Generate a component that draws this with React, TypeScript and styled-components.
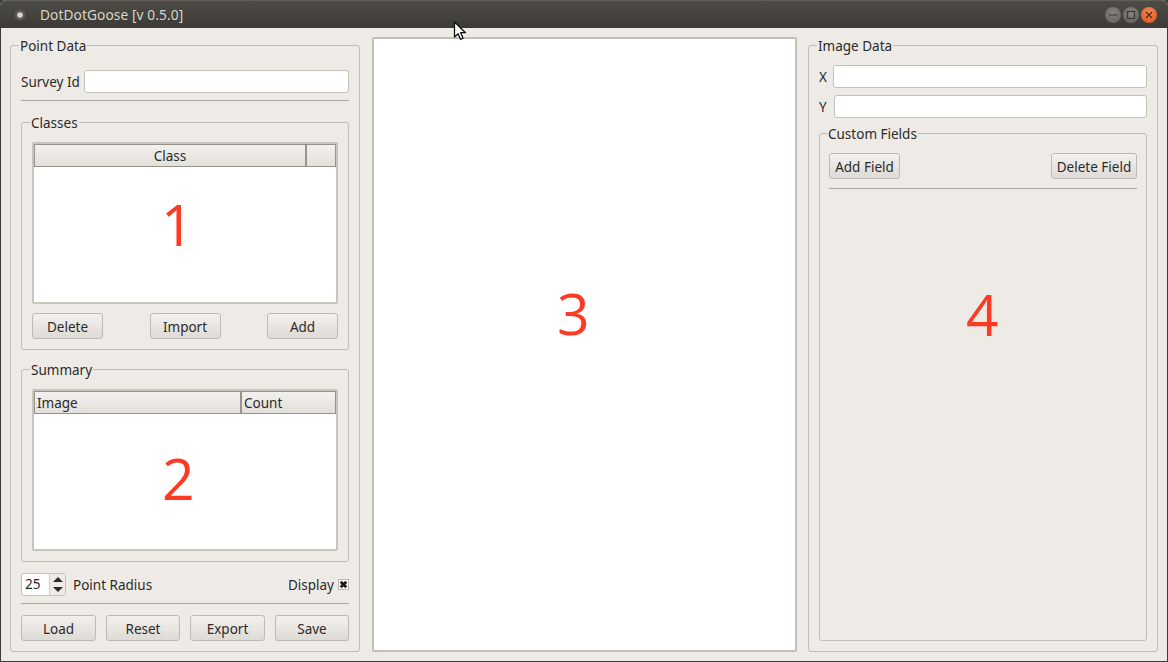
import React, { FC } from 'react';
import styled, { createGlobalStyle } from 'styled-components';

const Global = createGlobalStyle`
  html, body {
    margin: 0;
    padding: 0;
    background: #3c3b37;
  }
  * { box-sizing: border-box; }
`;

const Window = styled.div`
  position: relative;
  width: 1168px;
  height: 662px;
  display: flex;
  flex-direction: column;
  overflow: hidden;
  background: #eeebe7;
  border-radius: 6px 6px 0 0;
  font-family: "Noto Sans", "Open Sans", sans-serif;
  font-size: 13.5px;
  color: #2b2a28;
`;

const TitleBar = styled.div`
  height: 28px;
  flex: none;
  display: flex;
  align-items: center;
  padding: 0 11px 0 14px;
  background: linear-gradient(#4e4c46, #3b3a36);
  border-top: 1px solid #5f5d56;
  color: #d9d5cb;
  font-size: 13.7px;
  letter-spacing: 0.1px;
`;

const AppDot = styled.svg`
  width: 12px;
  height: 12px;
  margin-right: 14px;
`;

const Title = styled.span`
  flex: 1;
`;

const WinControls = styled.div`
  display: flex;
  gap: 2px;
`;

const WinBtn = styled.div<{ $close?: boolean }>`
  width: 16px;
  height: 16px;
  border-radius: 50%;
  display: flex;
  align-items: center;
  justify-content: center;
  background: ${p => p.$close
    ? 'radial-gradient(circle at 50% 35%, #f48a55, #df4e1c)'
    : 'radial-gradient(circle at 50% 35%, #85837c, #5e5d57)'};
`;

const Body = styled.div`
  flex: 1;
  min-height: 0;
  display: grid;
  grid-template-columns: 351px 425px 350px;
  column-gap: 11px;
  padding: 8px 9px 9px;
  border: 1px solid #3c3b37;
  border-top: 0;
`;

const Group = styled.fieldset<{ $top?: number }>`
  min-width: 0;
  margin: 0;
  padding: ${p => p.$top ?? 11}px 10px 10px;
  border: 1px solid #c0bdb6;
  border-radius: 3px;
  display: flex;
  flex-direction: column;
`;

const PointGroup = styled(Group)`
  margin-right: 1px;
`;

const Legend = styled.legend`
  padding: 0 1px;
  margin-left: -2px;
  height: 18px;
  line-height: 20px;
`;

const Row = styled.div<{ $mt?: number }>`
  display: flex;
  align-items: center;
  margin-top: ${p => p.$mt ?? 0}px;
`;

const Label = styled.span<{ $w?: number; $ml?: number }>`
  flex: none;
  width: ${p => (p.$w ? `${p.$w}px` : 'auto')};
  margin-left: ${p => p.$ml ?? 0}px;
  white-space: nowrap;
`;

const TextInput = styled.div`
  flex: 1;
  height: 23px;
  background: #fff;
  border: 1px solid #c4c1ba;
  border-radius: 3px;
`;

const Separator = styled.hr<{ $mt: number }>`
  width: 100%;
  height: 1px;
  flex: none;
  margin: ${p => p.$mt}px 0 0;
  border: 0;
  background: #a8a59e;
`;

const TableBox = styled.div`
  height: 162px;
  flex: none;
  display: flex;
  flex-direction: column;
  background: #fff;
  border: 2px solid #c8c5be;
  border-radius: 2px;
`;

const TableHead = styled.div`
  height: 23px;
  flex: none;
  display: flex;
`;

const HeadCell = styled.div<{ $w?: number; $center?: boolean }>`
  flex: ${p => (p.$w ? `0 0 ${p.$w}px` : '1')};
  display: flex;
  align-items: center;
  justify-content: ${p => (p.$center ? 'center' : 'flex-start')};
  padding: 0 2px;
  background: linear-gradient(#f3f1ee, #e3e0db);
  border: 1px solid #96938c;
`;

const TableArea = styled.div`
  flex: 1;
`;

const BigNum = styled.span<{ $x: number; $y: number }>`
  position: absolute;
  left: ${p => p.$x}px;
  top: ${p => p.$y}px;
  font-family: "Open Sans", "Noto Sans", sans-serif;
  font-size: 57px;
  font-weight: 500;
  line-height: 1;
  color: #ff3a24;
`;

const BtnRow = styled.div<{ $mt: number }>`
  display: flex;
  justify-content: space-between;
  flex: none;
  margin-top: ${p => p.$mt}px;
`;

const Btn = styled.div<{ $w: number }>`
  width: ${p => p.$w}px;
  height: 26px;
  padding-top: 1px;
  display: flex;
  align-items: center;
  justify-content: center;
  background: linear-gradient(#f3f1ee, #dedbd6);
  border: 1px solid #bdbab3;
  border-radius: 3px;
  white-space: nowrap;
`;

const Spin = styled.div`
  width: 45px;
  height: 23px;
  flex: none;
  display: flex;
  background: #fff;
  border: 1px solid #c4c1ba;
  border-radius: 3px;
  overflow: hidden;
`;

const SpinValue = styled.span`
  flex: 1;
  padding-left: 3px;
  line-height: 21px;
`;

const SpinArrows = styled.div`
  width: 16px;
  display: flex;
  flex-direction: column;
  background: #eeebe7;
  border-left: 1px solid #d0cdc6;
`;

const SpinArrow = styled.div<{ $down?: boolean }>`
  flex: 1;
  display: flex;
  align-items: center;
  justify-content: center;
  &::before {
    content: '';
    border-left: 5px solid transparent;
    border-right: 5px solid transparent;
    ${p => (p.$down ? 'border-top: 5px solid #2b2a28;' : 'border-bottom: 5px solid #2b2a28;')}
  }
`;

const Spacer = styled.div`
  flex: 1;
`;

const Check = styled.svg`
  width: 11px;
  height: 11px;
  margin-left: 4px;
  flex: none;
`;

const Canvas = styled.div`
  margin-top: 1px;
  background: #fff;
  border: 2px solid #c2bfb8;
  border-radius: 2px;
`;

const ClassesGroup = styled(Group)`
  flex: none;
  margin-top: 12px;
`;

const SummaryGroup = styled(Group)`
  flex: none;
  margin-top: 10px;
`;

const CustomGroup = styled(Group)`
  flex: 1;
  min-height: 0;
  margin-top: 6px;
  padding-left: 9px;
  padding-right: 9px;
`;

const Cursor = styled.svg`
  position: absolute;
  left: 453px;
  top: 21px;
  width: 15px;
  height: 21px;
`;

interface ITableProps {
  cols: { name: string; w?: number; center?: boolean }[];
}

const DataTable: FC<ITableProps> = ({ cols }) => (
  <TableBox>
    <TableHead>
      {cols.map((c, i) => (
        <HeadCell key={i} $w={c.w} $center={c.center}>{c.name}</HeadCell>
      ))}
    </TableHead>
    <TableArea />
  </TableBox>
);

const App: FC = () => (
  <Window>
    <Global />
    <TitleBar>
      <AppDot viewBox="0 0 12 12">
        <circle cx="6" cy="6" r="5.5" fill="#5a5852" />
        <circle cx="6" cy="6" r="2.8" fill="#d8d6d0" />
      </AppDot>
      <Title>DotDotGoose [v 0.5.0]</Title>
      <WinControls>
        <WinBtn>
          <svg width="10" height="10" viewBox="0 0 10 10">
            <path d="M1 5h8" stroke="#3a3935" strokeWidth="1.2" />
          </svg>
        </WinBtn>
        <WinBtn>
          <svg width="10" height="10" viewBox="0 0 10 10">
            <rect x="1.5" y="1.5" width="7" height="7" fill="none" stroke="#3a3935" strokeWidth="1.2" />
          </svg>
        </WinBtn>
        <WinBtn $close>
          <svg width="10" height="10" viewBox="0 0 10 10">
            <path d="M2 2l6 6M8 2l-6 6" stroke="#4a2312" strokeWidth="1.2" />
          </svg>
        </WinBtn>
      </WinControls>
    </TitleBar>
    <Body>
      <PointGroup $top={16}>
        <Legend>Point Data</Legend>
        <Row>
          <Label $w={63}>Survey Id</Label>
          <TextInput />
        </Row>
        <Separator $mt={7} />
        <ClassesGroup>
          <Legend>Classes</Legend>
          <DataTable cols={[{ name: 'Class', w: 272, center: true }, { name: '' }]} />
          <BtnRow $mt={9}>
            <Btn $w={71}>Delete</Btn>
            <Btn $w={71}>Import</Btn>
            <Btn $w={71}>Add</Btn>
          </BtnRow>
        </ClassesGroup>
        <SummaryGroup>
          <Legend>Summary</Legend>
          <DataTable cols={[{ name: 'Image', w: 207 }, { name: 'Count' }]} />
        </SummaryGroup>
        <Row $mt={11}>
          <Spin>
            <SpinValue>25</SpinValue>
            <SpinArrows>
              <SpinArrow />
              <SpinArrow $down />
            </SpinArrows>
          </Spin>
          <Label $ml={7}>Point Radius</Label>
          <Spacer />
          <Label>Display</Label>
          <Check viewBox="0 0 11 11">
            <rect x="0.5" y="0.5" width="10" height="10" fill="#fff" stroke="#bdbab3" />
            <path d="M2.7 2.7l5.6 5.6M8.3 2.7l-5.6 5.6" stroke="#1d1c1a" strokeWidth="2.8" />
          </Check>
        </Row>
        <Separator $mt={7} />
        <BtnRow $mt={11}>
          <Btn $w={75}>Load</Btn>
          <Btn $w={74}>Reset</Btn>
          <Btn $w={75}>Export</Btn>
          <Btn $w={74}>Save</Btn>
        </BtnRow>
      </PointGroup>
      <Canvas />
      <Group>
        <Legend>Image Data</Legend>
        <Row>
          <Label $w={14}>X</Label>
          <TextInput />
        </Row>
        <Row $mt={7}>
          <Label $w={15}>Y</Label>
          <TextInput />
        </Row>
        <CustomGroup>
          <Legend>Custom Fields</Legend>
          <BtnRow $mt={0}>
            <Btn $w={71}>Add Field</Btn>
            <Btn $w={86}>Delete Field</Btn>
          </BtnRow>
          <Separator $mt={9} />
        </CustomGroup>
      </Group>
    </Body>
    <BigNum $x={161} $y={196}>1</BigNum>
    <BigNum $x={162} $y={450}>2</BigNum>
    <BigNum $x={557} $y={285}>3</BigNum>
    <BigNum $x={966} $y={286}>4</BigNum>
    <Cursor viewBox="0 0 15 21">
      <path d="M1.5 1v15l3.6-3.3 2.4 5.6 2.6-1.1-2.4-5.5h4.8z" fill="#fff" stroke="#111" strokeWidth="1.3" strokeLinejoin="round" />
    </Cursor>
  </Window>
);

export default App;
